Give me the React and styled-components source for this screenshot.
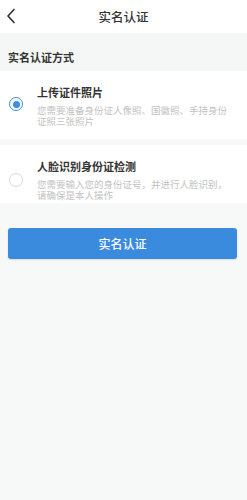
import React, { useState } from "react";
import styled, { createGlobalStyle } from "styled-components";

const GlobalStyle = createGlobalStyle`
  html, body {
    margin: 0;
    padding: 0;
    background: #f7f8f8;
  }
  body {
    font-family: "Noto Sans CJK SC", "Noto Sans", sans-serif;
  }
`;

const options = [
  {
    id: "photo",
    title: "上传证件照片",
    desc: "您需要准备身份证人像照、国徽照、手持身份证照三张照片",
  },
  {
    id: "face",
    title: "人脸识别身份证检测",
    desc: "您需要输入您的身份证号，并进行人脸识别，请确保是本人操作",
  },
];

export default function App() {
  const [selected, setSelected] = useState("photo");

  return (
    <Page>
      <GlobalStyle />
      <Header>
        <BackButton aria-label="返回">
          <svg width="10" height="16" viewBox="0 0 10 16">
            <path
              d="M8 1.5 L2 8 L8 14.5"
              fill="none"
              stroke="#333"
              strokeWidth="1.7"
              strokeLinecap="round"
              strokeLinejoin="round"
            />
          </svg>
        </BackButton>
        <Title>实名认证</Title>
      </Header>

      <SectionHead>实名认证方式</SectionHead>

      <OptionList>
        {options.map((opt, i) => (
          <Option
            key={opt.id}
            $last={i === options.length - 1}
            onClick={() => setSelected(opt.id)}
          >
            <Radio $checked={selected === opt.id} />
            <OptionBody>
              <OptionTitle>{opt.title}</OptionTitle>
              <OptionDesc>{opt.desc}</OptionDesc>
            </OptionBody>
          </Option>
        ))}
      </OptionList>

      <Submit>实名认证</Submit>
    </Page>
  );
}

const Page = styled.div`
  min-height: 500px;
  background: #f7f8f8;
`;

const Header = styled.div`
  position: relative;
  height: 33px;
  display: flex;
  align-items: center;
  justify-content: center;
  background: #fff;
`;

const BackButton = styled.button`
  position: absolute;
  left: 6px;
  top: 8px;
  padding: 0;
  border: 0;
  background: none;
  display: flex;
`;

const Title = styled.div`
  font-size: 12.5px;
  font-weight: 500;
  color: #333;
  line-height: 14px;
`;

const SectionHead = styled.div`
  background: #f5f6f6;
  padding: 18px 8px 8px;
  font-size: 11px;
  line-height: 12px;
  font-weight: 700;
  color: #333;
`;

const OptionList = styled.div`
  display: flex;
  flex-direction: column;
  gap: 6px;
`;

const Option = styled.div`
  display: flex;
  align-items: center;
  gap: 14px;
  background: #fff;
  padding: ${(p) => (p.$last ? "15px 14px 3px 9px" : "15px 14px 13px 9px")};
`;

const Radio = styled.span`
  flex: none;
  box-sizing: border-box;
  width: 14px;
  height: 14px;
  border-radius: 50%;
  border: 1.5px solid ${(p) => (p.$checked ? "#3b8fe8" : "#d9d9d9")};
  margin-top: ${(p) => (p.$checked ? "-4px" : "0")};
  display: flex;
  align-items: center;
  justify-content: center;
  &::after {
    content: "";
    width: 7px;
    height: 7px;
    border-radius: 50%;
    background: ${(p) => (p.$checked ? "#3b8fe8" : "transparent")};
  }
`;

const OptionBody = styled.div`
  display: flex;
  flex-direction: column;
  min-width: 0;
`;

const OptionTitle = styled.div`
  font-size: 11px;
  line-height: 12px;
  font-weight: 700;
  color: #333;
  margin-bottom: 7px;
`;

const OptionDesc = styled.div`
  font-size: 9.5px;
  line-height: 10.5px;
  color: #c2c2c2;
`;

const Submit = styled.button`
  display: block;
  box-sizing: border-box;
  margin: 25px 10px 0 8px;
  width: 229px;
  height: 31px;
  border: 0;
  border-radius: 3px;
  background: #3a8ade;
  color: #fff;
  font-family: "Noto Sans CJK SC", "Noto Sans", sans-serif;
  font-size: 12px;
  font-weight: 500;
  box-shadow: 0 1px 2px rgba(0, 0, 0, 0.12);
`;
